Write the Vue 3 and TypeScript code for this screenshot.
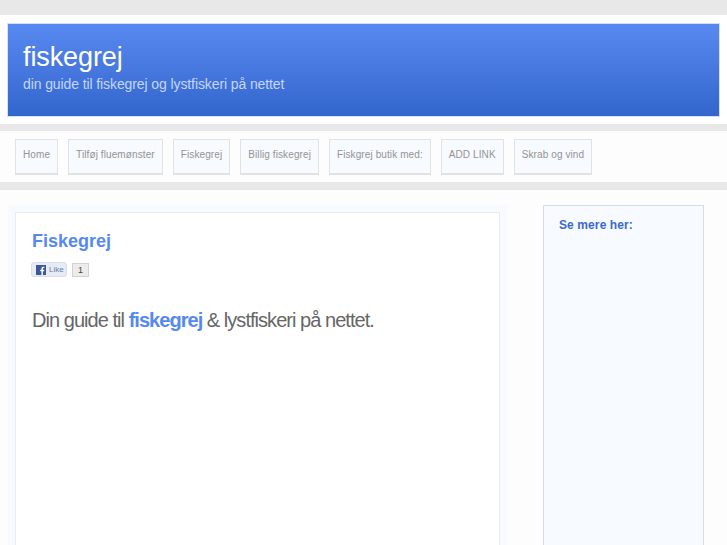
<template>
  <div class="page">
    <header class="header-band">
      <div class="banner">
        <h1 class="site-title">fiskegrej</h1>
        <p class="site-tagline">din guide til fiskegrej og lystfiskeri på nettet</p>
      </div>
    </header>

    <nav class="nav-band">
      <a v-for="item in navItems" :key="item" class="nav-item">{{ item }}</a>
    </nav>

    <main class="columns">
      <section class="content-outer">
        <div class="content-inner">
          <h2 class="post-title">Fiskegrej</h2>
          <div class="like-row">
            <span class="like-button">
              <svg class="fb-icon" width="10" height="10" viewBox="0 0 11 11">
                <rect width="11" height="11" fill="#3b5998" />
                <path d="M7.6 11V6.8h1.3l.2-1.6H7.6v-1c0-.5.2-.8.8-.8h.8V1.9c-.3 0-.7-.1-1.2-.1-1.2 0-2 .7-2 2v1.4H4.7v1.6H6V11z" fill="#fff" />
              </svg>
              <span class="like-label">Like</span>
            </span>
            <span class="like-count">1</span>
          </div>
          <p class="lead">Din guide til <strong class="lead-key">fiskegrej</strong> &amp; lystfiskeri på nettet.</p>
        </div>
      </section>

      <aside class="sidebar">
        <h3 class="sidebar-title">Se mere her:</h3>
      </aside>
    </main>
  </div>
</template>

<script setup lang="ts">
const navItems: string[] = [
  'Home',
  'Tilføj fluemønster',
  'Fiskegrej',
  'Billig fiskegrej',
  'Fiskgrej butik med:',
  'ADD LINK',
  'Skrab og vind'
]
</script>

<style>
html,
body {
  margin: 0;
  height: 100%;
  overflow: hidden;
  background: #fdfdfd;
}
</style>

<style scoped>
.page {
  height: 545px;
  overflow: hidden;
  background: #fdfdfd;
  font-family: "Liberation Sans", Arial, sans-serif;
}

.header-band {
  padding: 8px 7px 7px;
  background: #fff;
  border-top: 15px solid #e8e8e8;
  border-bottom: 7px solid #e8e8e8;
}

.banner {
  box-sizing: border-box;
  height: 94px;
  padding: 18px 15px 0;
  background: linear-gradient(#5889f1, #3366cc);
  border: 1px solid #d3e0f8;
}

.site-title {
  margin: 0;
  font-size: 27px;
  line-height: 30px;
  letter-spacing: -0.1px;
  font-weight: 400;
  color: #fff;
}

.site-tagline {
  margin: 4px 0 0;
  font-size: 14px;
  line-height: 16px;
  letter-spacing: -0.1px;
  color: #c4d6fa;
}

.nav-band {
  display: flex;
  gap: 10px;
  padding: 8px 15px 7px;
  background: #fdfdfd;
  border-bottom: 8px solid #e8e8e8;
}

.nav-item {
  box-sizing: border-box;
  height: 36px;
  padding: 9px 7px 0;
  background: #f7faff;
  border: 1px solid #e2e2e2;
  border-bottom-width: 2px;
  font-size: 10px;
  line-height: 12px;
  letter-spacing: 0.1px;
  color: #949494;
}

.columns {
  display: flex;
  align-items: flex-start;
  padding: 15px 0 0 8px;
}

.content-outer {
  box-sizing: border-box;
  width: 499px;
  height: 400px;
  padding: 7px 7px 0;
  background: #f7faff;
}

.content-inner {
  box-sizing: border-box;
  height: 393px;
  padding: 18px 16px 0;
  background: #fff;
  border: 1px solid #e8ebf1;
}

.post-title {
  margin: 0;
  font-size: 18px;
  line-height: 20px;
  font-weight: 700;
  color: #5589f0;
}

.like-row {
  display: flex;
  align-items: center;
  gap: 5px;
  margin: 11px 0 0 -1px;
}

.like-button {
  display: flex;
  align-items: center;
  gap: 3px;
  box-sizing: border-box;
  width: 36px;
  height: 15px;
  padding-left: 4px;
  background: #e6ebf5;
  border: 1px solid #d8dfea;
  border-radius: 3px;
}

.like-label {
  font-size: 8px;
  line-height: 10px;
  color: #6a7ba0;
}

.like-count {
  box-sizing: border-box;
  width: 17px;
  height: 14px;
  background: #ececec;
  border: 1px solid #d2d2d2;
  font-size: 9px;
  line-height: 12px;
  text-align: center;
  color: #444;
}

.lead {
  margin: 31px 0 0;
  font-size: 20px;
  line-height: 24px;
  letter-spacing: -0.96px;
  color: #666;
}

.lead-key {
  font-weight: 700;
  color: #5589f0;
}

.sidebar {
  box-sizing: border-box;
  width: 161px;
  height: 400px;
  margin-left: 36px;
  padding: 12px 15px 0;
  background: #f7faff;
  border: 1px solid #d5dce6;
}

.sidebar-title {
  margin: 0;
  font-size: 12px;
  line-height: 15px;
  letter-spacing: 0.1px;
  font-weight: 700;
  color: #3a69ce;
}
</style>
